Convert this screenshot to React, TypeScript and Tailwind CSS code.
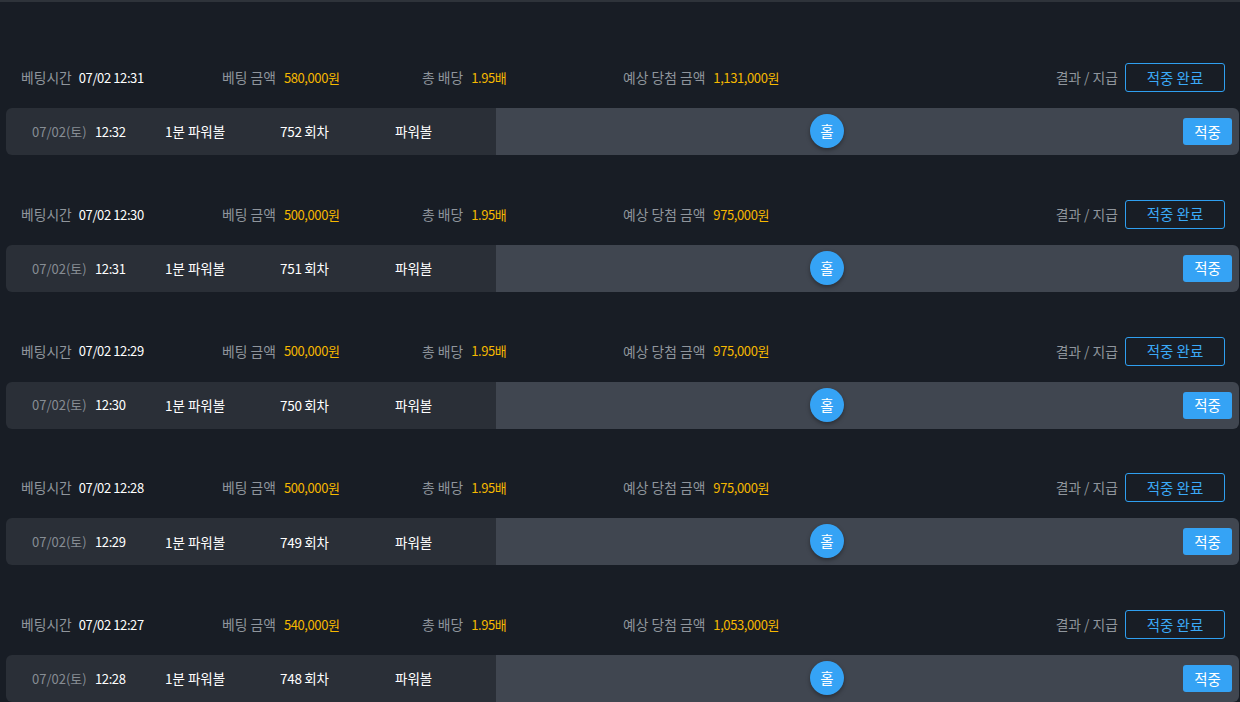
import React from "react";

const data = [
  { bt: "07/02 12:31", amt: "580,000원", win: "1,131,000원", time: "12:32", round: "752" },
  { bt: "07/02 12:30", amt: "500,000원", win: "975,000원", time: "12:31", round: "751" },
  { bt: "07/02 12:29", amt: "500,000원", win: "975,000원", time: "12:30", round: "750" },
  { bt: "07/02 12:28", amt: "500,000원", win: "975,000원", time: "12:29", round: "749" },
  { bt: "07/02 12:27", amt: "540,000원", win: "1,053,000원", time: "12:28", round: "748" },
];

export default function App() {
  return (
    <div
      className="w-[1240px] h-[702px] overflow-hidden bg-[#181d25] border-t-2 border-[#2e333a] pt-[61px] text-[13px]"
      style={{ fontFamily: '"Noto Sans CJK KR", "Noto Sans", sans-serif' }}
    >
      {data.map((d, i) => (
        <div key={i} className="mb-[44.75px]">
          <div className="flex items-center h-[29px] pl-[21px] pr-[15px]">
            <div className="w-[201px] flex items-center">
              <span className="text-[#8f959c] text-[13.8px]">베팅시간</span>
              <span className="ml-[7px] text-white tracking-[-0.4px]">{d.bt}</span>
            </div>
            <div className="w-[200px] flex items-center">
              <span className="text-[#8f959c] text-[13.8px]">베팅 금액</span>
              <span className="ml-[8px] text-[#f5b800] tracking-[-0.4px]">{d.amt}</span>
            </div>
            <div className="w-[201px] flex items-center">
              <span className="text-[#8f959c] text-[13.8px]">총 배당</span>
              <span className="ml-[8px] text-[#f5b800] tracking-[-0.4px]">1.95배</span>
            </div>
            <div className="flex items-center">
              <span className="text-[#8f959c] text-[13.8px]">예상 당첨 금액</span>
              <span className="ml-[8px] text-[#f5b800] tracking-[-0.4px]">{d.win}</span>
            </div>
            <div className="ml-auto flex items-center">
              <span className="text-[#8f959c] text-[13.8px]">결과 / 지급</span>
              <div className="ml-[7px] w-[100px] h-[29px] rounded-[3px] border border-[#2f9ff0] text-[#3ba9f7] text-[14.5px] flex items-center justify-center">
                적중 완료
              </div>
            </div>
          </div>
          <div className="mt-[16px] ml-[6px] mr-[1px] h-[47px] flex rounded-[6px] overflow-hidden">
            <div className="w-[490px] bg-[#2a2f37] flex items-center pl-[26px]">
              <span className="w-[63px] text-[#878d94]">07/02(토)</span>
              <span className="w-[70px] text-white tracking-[-0.4px]">{d.time}</span>
              <span className="w-[115px] text-white text-[13.5px]">1분 파워볼</span>
              <span className="w-[115px] text-white text-[13.5px] tracking-[-0.3px]">{d.round} 회차</span>
              <span className="text-white text-[13.5px]">파워볼</span>
            </div>
            <div className="flex-1 bg-[#404650] flex items-center relative">
              <div className="absolute left-[314px] top-[6px] w-[34px] h-[34px] rounded-full bg-[#35a3f5] shadow-[0_2px_4px_rgba(0,0,0,0.35)] flex items-center justify-center text-white text-[14.5px]">
                홀
              </div>
              <div className="ml-auto mr-[7px] w-[49px] h-[27px] rounded-[3px] bg-[#35a3f5] text-white text-[14.5px] flex items-center justify-center">
                적중
              </div>
            </div>
          </div>
        </div>
      ))}
    </div>
  );
}
